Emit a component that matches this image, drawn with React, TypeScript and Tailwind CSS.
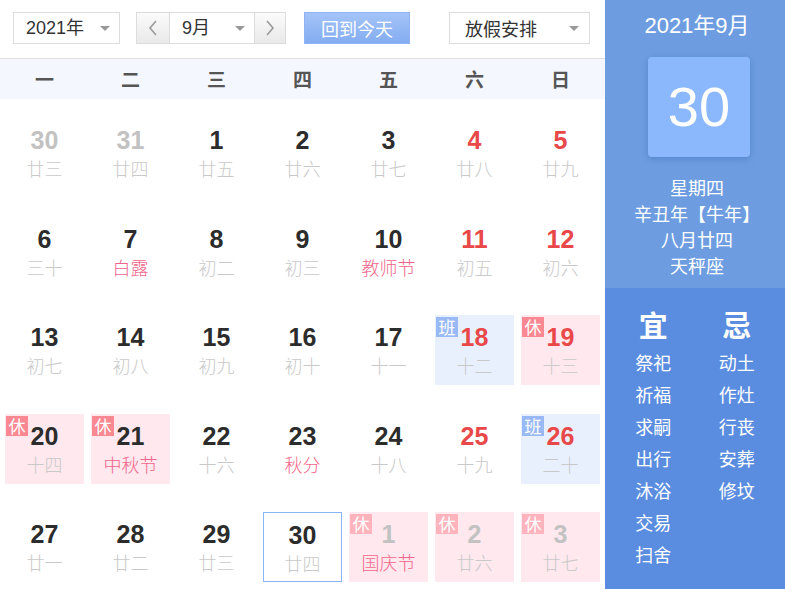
type Tag = 'rest' | 'work';

interface Day {
  num: number;
  lunar: string;
  weekend?: boolean;
  festival?: boolean;
  other?: boolean;
  tag?: Tag;
  today?: boolean;
}

const days: Day[] = [
  { num: 30, lunar: '廿三', other: true },
  { num: 31, lunar: '廿四', other: true },
  { num: 1, lunar: '廿五' },
  { num: 2, lunar: '廿六' },
  { num: 3, lunar: '廿七' },
  { num: 4, lunar: '廿八', weekend: true },
  { num: 5, lunar: '廿九', weekend: true },

  { num: 6, lunar: '三十' },
  { num: 7, lunar: '白露', festival: true },
  { num: 8, lunar: '初二' },
  { num: 9, lunar: '初三' },
  { num: 10, lunar: '教师节', festival: true },
  { num: 11, lunar: '初五', weekend: true },
  { num: 12, lunar: '初六', weekend: true },

  { num: 13, lunar: '初七' },
  { num: 14, lunar: '初八' },
  { num: 15, lunar: '初九' },
  { num: 16, lunar: '初十' },
  { num: 17, lunar: '十一' },
  { num: 18, lunar: '十二', weekend: true, tag: 'work' },
  { num: 19, lunar: '十三', weekend: true, tag: 'rest' },

  { num: 20, lunar: '十四', tag: 'rest' },
  { num: 21, lunar: '中秋节', festival: true, tag: 'rest' },
  { num: 22, lunar: '十六' },
  { num: 23, lunar: '秋分', festival: true },
  { num: 24, lunar: '十八' },
  { num: 25, lunar: '十九', weekend: true },
  { num: 26, lunar: '二十', weekend: true, tag: 'work' },

  { num: 27, lunar: '廿一' },
  { num: 28, lunar: '廿二' },
  { num: 29, lunar: '廿三' },
  { num: 30, lunar: '廿四', today: true },
  { num: 1, lunar: '国庆节', festival: true, other: true, tag: 'rest' },
  { num: 2, lunar: '廿六', other: true, tag: 'rest' },
  { num: 3, lunar: '廿七', other: true, tag: 'rest' },
];

const weekdays = ['一', '二', '三', '四', '五', '六', '日'];
const yi = ['祭祀', '祈福', '求嗣', '出行', '沐浴', '交易', '扫舍'];
const ji = ['动土', '作灶', '行丧', '安葬', '修坟'];

const CJK = "font-['Noto_Sans_CJK_SC',sans-serif]";
const NUM = "font-['Liberation_Sans','Noto_Sans_CJK_SC',sans-serif]";

function Caret() {
  return (
    <span className="w-0 h-0 border-x-[5px] border-x-transparent border-t-[5px] border-t-[#999]" />
  );
}

function Chevron({ dir }: { dir: 'left' | 'right' }) {
  return (
    <svg width="10" height="18" viewBox="0 0 10 18">
      <polyline
        points={dir === 'left' ? '8,2 2,9 8,16' : '2,2 8,9 2,16'}
        fill="none"
        stroke="#9a9a9a"
        strokeWidth="1.6"
      />
    </svg>
  );
}

function DayCell({ day }: { day: Day }) {
  let bg = '';
  if (day.tag === 'rest') bg = 'bg-[#ffe8ee]';
  if (day.tag === 'work') bg = 'bg-[#e8f0fd]';
  const border = day.today ? 'border border-[#8ab4f8]' : '';

  let numColor = 'text-[#2c2c2c]';
  if (day.weekend) numColor = 'text-[#e94848]';
  if (day.other) numColor = 'text-[#c2c2c2]';

  const lunarColor = day.festival ? 'text-[#f2658a]' : 'text-[#c9c9c9]';

  return (
    <div className={`relative h-[70px] flex flex-col items-center pt-[8px] ${bg} ${border}`}>
      {day.tag && (
        <span
          className={`absolute left-[1px] top-[2px] w-[22px] h-[20px] flex items-center justify-center text-[17px] leading-[20px] text-white ${CJK} ${
            day.tag === 'rest'
              ? day.other
                ? 'bg-[#ffb3bc]'
                : 'bg-[#f98892]'
              : 'bg-[#98b9f5]'
          }`}
        >
          {day.tag === 'rest' ? '休' : '班'}
        </span>
      )}
      <span className={`text-[25px] leading-[28px] font-bold ${NUM} ${numColor}`}>{day.num}</span>
      <span className={`mt-[3px] text-[18px] leading-[22px] font-light ${CJK} ${lunarColor}`}>
        {day.lunar}
      </span>
    </div>
  );
}

export default function App() {
  return (
    <div className={`w-[785px] h-[589px] flex bg-white overflow-hidden ${CJK}`}>
      {/* Calendar */}
      <div className="w-[605px] flex flex-col">
        {/* Toolbar */}
        <div className="h-[59px] flex items-start pt-[12px] pl-[13px] border-b border-[#dfdfdf]">
          <div className="w-[107px] h-[32px] border border-[#dcdcdc] flex items-center justify-between pl-[12px] pr-[9px]">
            <span className={`text-[18px] text-[#333] ${NUM}`}>2021年</span>
            <Caret />
          </div>

          <div className="ml-[16px] h-[32px] flex border border-[#dcdcdc]">
            <div className="w-[33px] flex items-center justify-center bg-gradient-to-b from-[#fbfbfb] to-[#e9e9e9] border-r border-[#dcdcdc]">
              <Chevron dir="left" />
            </div>
            <div className="w-[84px] flex items-center justify-between pl-[12px] pr-[9px] bg-white">
              <span className={`text-[18px] text-[#333] ${NUM}`}>9月</span>
              <Caret />
            </div>
            <div className="w-[31px] flex items-center justify-center bg-gradient-to-b from-[#fbfbfb] to-[#e9e9e9] border-l border-[#dcdcdc]">
              <Chevron dir="right" />
            </div>
          </div>

          <div className="ml-[18px] w-[106px] h-[32px] flex items-center justify-center bg-gradient-to-b from-[#a4c4f8] to-[#84acf1] border border-[#8eb2f2] text-white text-[18px]">
            回到今天
          </div>

          <div className="ml-[39px] w-[141px] h-[32px] border border-[#dcdcdc] flex items-center justify-between pl-[15px] pr-[10px]">
            <span className="text-[18px] text-[#333]">放假安排</span>
            <Caret />
          </div>
        </div>

        {/* Weekday header */}
        <div className="h-[40px] bg-[#f4f7fd] grid grid-cols-[repeat(7,79px)] gap-x-[7px] pl-[5px] items-center">
          {weekdays.map((w) => (
            <span key={w} className="text-center text-[19px] font-bold text-[#555]">
              {w}
            </span>
          ))}
        </div>

        {/* Days */}
        <div className="grid grid-cols-[repeat(7,79px)] gap-x-[7px] gap-y-[28.5px] pl-[5px] pt-[19px]">
          {days.map((d, i) => (
            <DayCell key={i} day={d} />
          ))}
        </div>
      </div>

      {/* Side panel */}
      <div className="w-[180px] flex flex-col text-white">
        <div className="h-[288px] bg-[#6d9de0] flex flex-col items-center pt-[12px] pl-[4px]">
          <span className={`text-[22px] leading-[28px] ${NUM}`}>2021年9月</span>
          <div className="mt-[17px] ml-[4px] w-[102px] h-[100px] rounded-[4px] bg-[#8bb8fd] shadow-[0_2px_6px_rgba(40,80,160,0.3)] flex items-center justify-center">
            <span className={`text-[56px] leading-none ${NUM}`}>30</span>
          </div>
          <div className="mt-[17px] flex flex-col items-center text-[18px] leading-[26px]">
            <span>星期四</span>
            <span>辛丑年【牛年】</span>
            <span>八月廿四</span>
            <span>天秤座</span>
          </div>
        </div>

        <div className="flex-1 bg-[#5a8ddf] flex gap-x-[17px] px-[15px] pt-[16px]">
          <div className="w-[70px] flex flex-col items-center">
            <span className="text-[29px] leading-[40px] font-bold">宜</span>
            <div className="mt-[2px] flex flex-col items-center text-[18px] leading-[32px]">
              {yi.map((t) => (
                <span key={t}>{t}</span>
              ))}
            </div>
          </div>
          <div className="w-[70px] flex flex-col items-center">
            <span className="text-[29px] leading-[40px] font-bold">忌</span>
            <div className="mt-[2px] flex flex-col items-center text-[18px] leading-[32px]">
              {ji.map((t) => (
                <span key={t}>{t}</span>
              ))}
            </div>
          </div>
        </div>
      </div>
    </div>
  );
}
